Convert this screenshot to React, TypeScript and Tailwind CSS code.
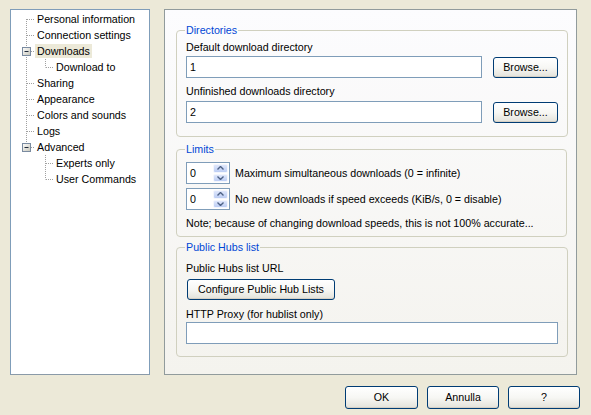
import React from "react";

type Node = {
    label: string;
    children?: Node[];
};

const tree: Node[] = [
    { label: "Personal information" },
    { label: "Connection settings" },
    { label: "Downloads", children: [{ label: "Download to" }] },
    { label: "Sharing" },
    { label: "Appearance" },
    { label: "Colors and sounds" },
    { label: "Logs" },
    { label: "Advanced", children: [{ label: "Experts only" }, { label: "User Commands" }] },
];

const dot = "#a0a0a0";

function AncestorCol({ line }: { line: boolean }) {
    return (
        <svg width="19" height="16" className="shrink-0">
            {line && <line x1="14.5" y1="0" x2="14.5" y2="16" stroke={dot} strokeDasharray="1 1" />}
        </svg>
    );
}

function NodeCol({ first, last, expander }: { first: boolean; last: boolean; expander: boolean }) {
    return (
        <svg width="23" height="16" className="shrink-0">
            <line
                x1="14.5"
                y1={first ? 8 : 0}
                x2="14.5"
                y2={last ? 8.5 : 16}
                stroke={dot}
                strokeDasharray="1 1"
            />
            <line x1="15" y1="8.5" x2="23" y2="8.5" stroke={dot} strokeDasharray="1 1" />
            {expander && (
                <g>
                    <defs>
                        <linearGradient id="exp" x1="0" y1="0" x2="1" y2="1">
                            <stop offset="0" stopColor="#ffffff" />
                            <stop offset="1" stopColor="#c6c5b9" />
                        </linearGradient>
                    </defs>
                    <rect x="10.5" y="4.5" width="8" height="8" fill="url(#exp)" stroke="#7a8ba0" />
                    <line x1="12.5" y1="8.5" x2="16.5" y2="8.5" stroke="#1f2a3a" />
                </g>
            )}
        </svg>
    );
}

function Row({
    label,
    ancestors,
    first,
    last,
    expander,
    selected,
}: {
    label: string;
    ancestors: boolean[];
    first: boolean;
    last: boolean;
    expander: boolean;
    selected?: boolean;
}) {
    return (
        <div className="flex items-center h-[16px]">
            {ancestors.map((a, i) => (
                <AncestorCol key={i} line={a} />
            ))}
            <NodeCol first={first} last={last} expander={expander} />
            <span className={"px-[2px] leading-[14px] whitespace-nowrap " + (selected ? "bg-[#ece9d8]" : "")}>
                {label}
            </span>
        </div>
    );
}

function Tree() {
    const rows: React.ReactNode[] = [];
    tree.forEach((n, i) => {
        const lastTop = i === tree.length - 1;
        rows.push(
            <Row
                key={n.label}
                label={n.label}
                ancestors={[]}
                first={i === 0}
                last={lastTop}
                expander={!!n.children}
                selected={n.label === "Downloads"}
            />
        );
        n.children?.forEach((c, j) => {
            rows.push(
                <Row
                    key={c.label}
                    label={c.label}
                    ancestors={[!lastTop]}
                    first={false}
                    last={j === n.children!.length - 1}
                    expander={false}
                />
            );
        });
    });
    return (
        <div className="w-[140px] h-[366px] bg-white border border-[#7f9db9] border-b-[#8a9aa8] pt-[1px] pl-[1px]">
            {rows}
        </div>
    );
}

function XpButton({ children, className }: { children: React.ReactNode; className?: string }) {
    return (
        <button
            className={
                "border border-[#003c74] rounded-[3px] bg-gradient-to-b from-[#ffffff] via-[#f7f7f4] to-[#e3e2da] text-black leading-none shadow-[inset_0_-1px_0_#d6d0c5] " +
                (className ?? "")
            }
        >
            {children}
        </button>
    );
}

function TextBox({ value, className }: { value?: string; className?: string }) {
    return (
        <div
            className={
                "h-[22px] bg-white border border-[#7f9db9] pl-[3px] flex items-center " + (className ?? "")
            }
        >
            {value}
        </div>
    );
}

function Spinner({ value }: { value: string }) {
    return (
        <div className="flex w-[44px] h-[22px] bg-white border border-[#7f9db9] shrink-0">
            <div className="flex-1 pl-[3px] flex items-center">{value}</div>
            <div className="w-[16px] flex flex-col gap-[1px] p-[1px] pl-0">
                <div className="flex-1 flex items-center justify-center rounded-[2px] bg-gradient-to-b from-[#dfe7fb] to-[#bccdf4] border border-[#f3f6fd]">
                    <svg width="7" height="4" viewBox="0 0 7 4">
                        <path d="M0.5 3.5 L3.5 0.5 L6.5 3.5" fill="none" stroke="#4d6185" strokeWidth="1.4" />
                    </svg>
                </div>
                <div className="flex-1 flex items-center justify-center rounded-[2px] bg-gradient-to-b from-[#dfe7fb] to-[#bccdf4] border border-[#f3f6fd]">
                    <svg width="7" height="4" viewBox="0 0 7 4">
                        <path d="M0.5 0.5 L3.5 3.5 L6.5 0.5" fill="none" stroke="#4d6185" strokeWidth="1.4" />
                    </svg>
                </div>
            </div>
        </div>
    );
}

function Group({ title, children, className }: { title: string; children: React.ReactNode; className?: string }) {
    return (
        <fieldset className={"border border-[#d0d0bf] rounded-[4px] px-[9px] " + (className ?? "")}>
            <legend className="text-[#0046d5] leading-[13px] px-[1px] -ml-[1px]">{title}</legend>
            {children}
        </fieldset>
    );
}

export default function App() {
    return (
        <div
            className="w-[591px] h-[415px] bg-[#ece9d8] text-[10.7px] text-black overflow-hidden"
            style={{ fontFamily: '"Liberation Sans", Arial, sans-serif' }}
        >
            <div className="flex gap-[14px] pt-[9px] pl-[10px]">
                <Tree />

                <div className="w-[413px] h-[366px] bg-gradient-to-b from-[#fcfcfe] to-[#f4f3ee] border border-[#919b9c] pl-[11px] pr-[9px] pt-[14px]">
                    <Group title="Directories" className="pb-[13px]">
                        <div className="pt-[4px] leading-[13px]">Default download directory</div>
                        <div className="flex items-end gap-[11px] mt-[2px]">
                            <TextBox value="1" className="w-[296px]" />
                            <XpButton className="w-[65px] h-[21px]">Browse...</XpButton>
                        </div>
                        <div className="mt-[7px] leading-[13px]">Unfinished downloads directory</div>
                        <div className="flex items-end gap-[11px] mt-[3px]">
                            <TextBox value="2" className="w-[296px]" />
                            <XpButton className="w-[65px] h-[21px]">Browse...</XpButton>
                        </div>
                    </Group>

                    <Group title="Limits" className="mt-[6px] pb-[6px]">
                        <div className="flex items-center gap-[5px] pt-[6px]">
                            <Spinner value="0" />
                            <span>Maximum simultaneous downloads (0 = infinite)</span>
                        </div>
                        <div className="flex items-center gap-[5px] mt-[4px]">
                            <Spinner value="0" />
                            <span>No new downloads if speed exceeds (KiB/s, 0 = disable)</span>
                        </div>
                        <div className="mt-[7px] leading-[13px]">
                            Note; because of changing download speeds, this is not 100% accurate...
                        </div>
                    </Group>

                    <Group title="Public Hubs list" className="mt-[4px] pb-[12px]">
                        <div className="pt-[8px] leading-[13px]">Public Hubs list URL</div>
                        <XpButton className="mt-[4px] ml-[1px] w-[148px] h-[21px]">Configure Public Hub Lists</XpButton>
                        <div className="mt-[8px] leading-[13px]">HTTP Proxy (for hublist only)</div>
                        <TextBox className="mt-[1px] w-[372px]" />
                    </Group>
                </div>
            </div>

            <div className="flex gap-[9px] pl-[345px] pt-[11px]">
                <XpButton className="w-[73px] h-[23px]">OK</XpButton>
                <XpButton className="w-[72px] h-[23px]">Annulla</XpButton>
                <XpButton className="w-[72px] h-[23px]">?</XpButton>
            </div>
        </div>
    );
}
